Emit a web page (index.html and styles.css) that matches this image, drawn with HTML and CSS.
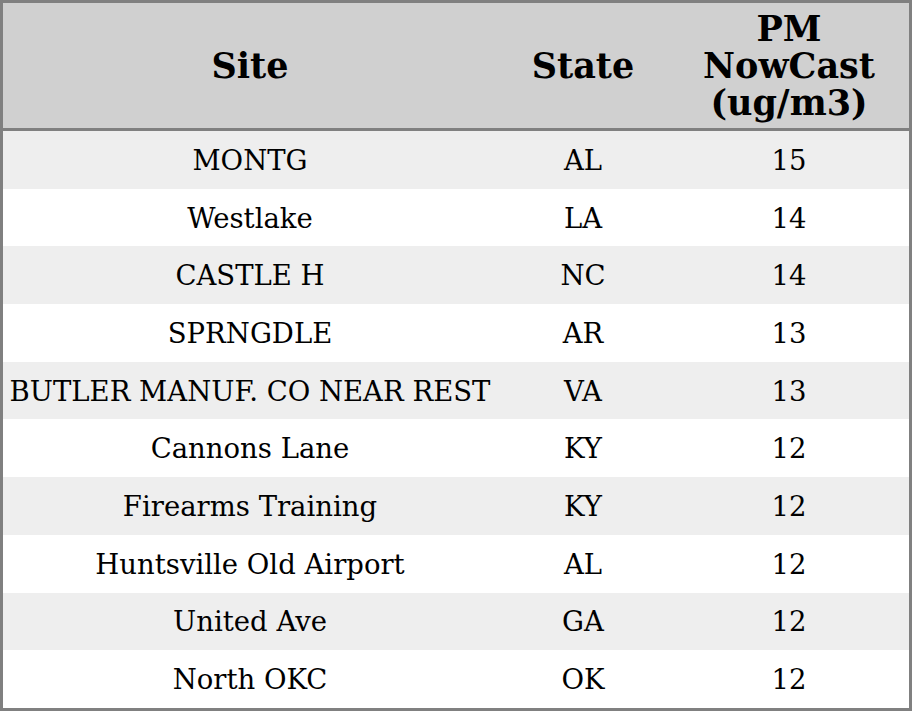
FILE: index.html
```html
<!DOCTYPE html>
<html>
<head>
<meta charset="utf-8">
<link rel="stylesheet" href="styles.css">
</head>
<body>
<table class="aq">
  <thead>
    <tr>
      <th class="c-site">Site</th>
      <th class="c-state">State</th>
      <th class="c-pm">PM<br>NowCast<br>(ug/m3)</th>
    </tr>
  </thead>
  <tbody>
    <tr><td>MONTG</td><td>AL</td><td>15</td></tr>
    <tr><td>Westlake</td><td>LA</td><td>14</td></tr>
    <tr><td>CASTLE H</td><td>NC</td><td>14</td></tr>
    <tr><td>SPRNGDLE</td><td>AR</td><td>13</td></tr>
    <tr><td>BUTLER MANUF. CO NEAR REST</td><td>VA</td><td>13</td></tr>
    <tr><td>Cannons Lane</td><td>KY</td><td>12</td></tr>
    <tr><td>Firearms Training</td><td>KY</td><td>12</td></tr>
    <tr><td>Huntsville Old Airport</td><td>AL</td><td>12</td></tr>
    <tr><td>United Ave</td><td>GA</td><td>12</td></tr>
    <tr><td>North OKC</td><td>OK</td><td>12</td></tr>
  </tbody>
</table>
</body>
</html>
```
FILE: styles.css
```css
html, body {
  margin: 0;
  padding: 0;
  background: #ffffff;
}
.aq {
  width: 912px;
  height: 711px;
  border-collapse: collapse;
  border: 3px solid #808080;
  font-family: "DejaVu Serif", serif;
  color: #000;
  table-layout: fixed;
}
.aq th {
  background: #d0d0d0;
  font-size: 35px;
  font-weight: bold;
  line-height: 37px;
  padding: 7px 0;
  height: 111px;
  text-align: center;
  vertical-align: middle;
  border-bottom: 3px solid #808080;
}
.c-site { width: 494px; }
.c-state { width: 172px; }
.c-pm { width: 240px; }
.aq td {
  font-size: 27.5px;
  text-align: center;
  vertical-align: middle;
  padding: 0;
  height: 57.7px;
  white-space: nowrap;
}
.aq tbody tr:nth-child(odd) td {
  background: #eeeeee;
}
```
